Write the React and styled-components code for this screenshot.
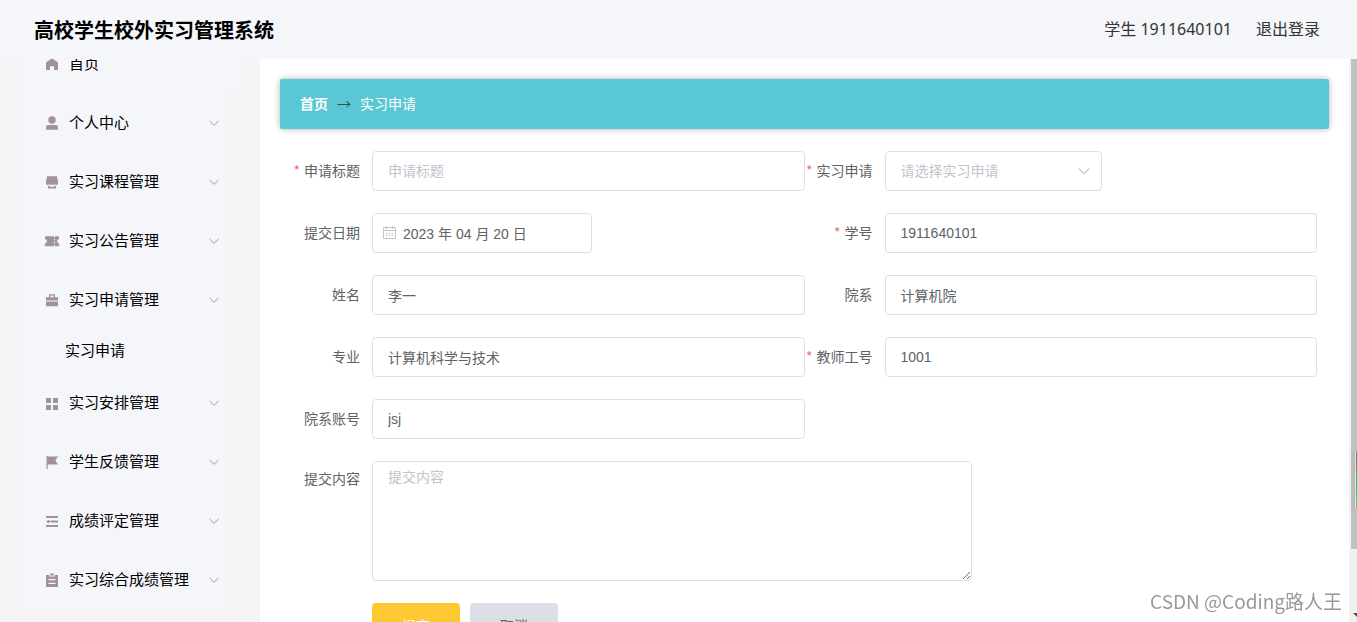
import React, { useState } from "react";
import styled, { createGlobalStyle } from "styled-components";

const GlobalStyle = createGlobalStyle`
  * {
    box-sizing: border-box;
  }

  body {
    margin: 0;
    font-family: "Noto Sans CJK SC", sans-serif;
    color: #606266;
  }

  button, input, select, textarea {
    font-family: "Liberation Sans", "Noto Sans CJK SC", sans-serif;
    font-size: 14px;
  }
`;

const Page = styled.div`
  height: 100vh;
  display: flex;
  flex-direction: column;
  overflow: hidden;
`;

const Header = styled.header`
  flex: none;
  height: 59px;
  padding: 0 37px 0 34px;
  display: flex;
  align-items: center;
  justify-content: space-between;
  background: #f4f6fa;
  z-index: 1;
`;

const Title = styled.h1`
  margin: 0;
  font-size: 20px;
  font-weight: bold;
  color: #000;
`;

const UserBar = styled.div`
  padding-bottom: 4px;
  display: flex;
  gap: 24px;
  font-family: "Noto Sans", "Noto Sans CJK SC", sans-serif;
  font-size: 16px;
  color: #333;
`;

const Logout = styled.a`
  color: inherit;
  text-decoration: none;
`;

const Body = styled.div`
  flex: 1;
  min-height: 0;
  display: flex;
`;

const Sidebar = styled.aside`
  flex: none;
  width: 260px;
  padding: 0 20px;
  background: #f5f5f5;
  overflow: hidden;
`;

// the menu is scrolled a little under the header
const Menu = styled.nav`
  margin-top: -25px;
  display: flex;
  flex-direction: column;
`;

const MenuItem = styled.button`
  height: 59px;
  margin: 0 ${(p) => (p.$wide ? "0" : "11px")} 0 0;
  padding: 0 9px 0 25px;
  display: flex;
  align-items: center;
  gap: 10px;
  border: none;
  background: #f4f6fa;
  font-family: "Noto Sans CJK SC", sans-serif;
  font-size: 15px;
  color: #000;
  text-align: left;
  cursor: pointer;
`;

const MenuText = styled.span`
  flex: 1;
  padding-bottom: 3px;
  white-space: nowrap;
`;

const SubItem = styled.a`
  height: 44px;
  margin-right: 11px;
  padding: 0 0 3px 45px;
  display: flex;
  align-items: center;
  background: #f4f6fa;
  font-size: 15px;
  color: #000;
  text-decoration: none;
`;

const Content = styled.main`
  flex: 1;
  min-width: 0;
  padding: 20px;
  background: #fff;
  overflow: hidden;
`;

const Breadcrumb = styled.div`
  height: 50px;
  padding: 0 20px 2px;
  display: flex;
  align-items: center;
  gap: 9px;
  border-radius: 2px;
  background: #59c7d4;
  box-shadow: 0 0 6px rgba(0, 0, 0, 0.3);
  font-size: 14px;
  color: #fff;
`;

const CrumbLink = styled.a`
  font-weight: bold;
  color: #fff;
  text-decoration: none;
`;

const CrumbArrow = styled.span`
  font-weight: 300;
  color: #303133;
`;

const Form = styled.form`
  padding: 22px 12px;
  display: grid;
  grid-template-columns: 1fr 1fr;
  row-gap: 22px;
`;

const FormItem = styled.div`
  display: flex;
  align-items: flex-start;
  grid-column: ${(p) => (p.$full ? "1 / -1" : "auto")};
`;

const Label = styled.label`
  flex: none;
  width: 80px;
  height: 38px;
  padding-right: 12px;
  line-height: ${(p) => (p.$top ? "34px" : "38px")};
  font-size: 14px;
  text-align: right;
  white-space: nowrap;

  &::before {
    content: "${(p) => (p.$required ? "*" : "")}";
    margin-right: 4px;
    color: #f56c6c;
  }
`;

const Input = styled.input`
  flex: 1;
  min-width: 0;
  height: 40px;
  padding: 0 15px;
  border: 1px solid #dcdfe6;
  border-radius: 4px;
  outline: none;
  background: #fff;
  color: #606266;

  &::placeholder {
    color: #c0c4cc;
  }
`;

const Field = styled.div`
  position: relative;
  width: ${(p) => p.$width};
  display: flex;

  svg {
    position: absolute;
    top: 13px;
    ${(p) => p.$side}: 11px;
    pointer-events: none;
  }
`;

const DateInput = styled(Input)`
  padding-left: 30px;
`;

const Select = styled.select`
  flex: 1;
  height: 40px;
  padding: 0 30px 0 15px;
  appearance: none;
  border: 1px solid #dcdfe6;
  border-radius: 4px;
  outline: none;
  background: #fff;
  color: #c0c4cc;
`;

const Textarea = styled.textarea`
  width: 600px;
  height: 120px;
  padding: 5px 15px;
  border: 1px solid #dcdfe6;
  border-radius: 4px;
  outline: none;
  line-height: 21px;
  color: #606266;

  &::placeholder {
    color: #c0c4cc;
  }
`;

const Actions = styled.div`
  grid-column: 1 / -1;
  padding-left: 80px;
  display: flex;
  gap: 10px;
`;

const Button = styled.button`
  width: 88px;
  height: 44px;
  border: none;
  border-radius: 4px;
  background: ${(p) => (p.$primary ? "#fdc831" : "#dcdfe6")};
  color: ${(p) => (p.$primary ? "#fff" : "#606266")};
  cursor: pointer;
`;

const ScrollTrack = styled.div`
  flex: none;
  width: 8px;
  padding-left: 2px;
  display: flex;
  flex-direction: column;
  justify-content: space-between;
  align-items: stretch;
  background: #f1f1f1;
`;

const ScrollThumb = styled.div`
  height: 87%;
  background: #c1c1c1;
`;

const ScrollArrow = styled.svg`
  align-self: flex-end;
  margin-bottom: 5px;
`;

const FloatTab = styled.div`
  position: fixed;
  right: 0;
  bottom: 113px;
  width: 2px;
  height: 58px;
  border-left: 1px solid #e4e4e4;
  border-radius: 3px 0 0 3px;
  background: linear-gradient(#777 0 20px, #22c878 20px 40px, #4fe05a);
  box-shadow: 0 0 4px rgba(0, 0, 0, 0.2);
  z-index: 2;
`;

const Watermark = styled.div`
  position: fixed;
  right: 15px;
  bottom: 8px;
  font-size: 19px;
  color: #999;
  z-index: 2;
`;

const iconShapes = {
  home: <path d="M7 1.2 13 5.4V12.4a.5.5 0 0 1-.5.5H9V9.3H5v3.6H1.5a.5.5 0 0 1-.5-.5V5.4z" />,
  user: (
    <>
      <circle cx="7" cy="4" r="3.7" />
      <path d="M3 9h8a2 2 0 0 1 2 2v2.2a.5.5 0 0 1-.5.5h-11a.5.5 0 0 1-.5-.5V11a2 2 0 0 1 2-2z" />
    </>
  ),
  shop: (
    <>
      <path d="M2 1.3h10l1 5.5v1.4a1.5 1.5 0 0 1-3 .4 1.5 1.5 0 0 1-3 0 1.5 1.5 0 0 1-3 0 1.5 1.5 0 0 1-3-.4V6.8z" />
      <path d="M3 10.8h1.5v1h5v-1H11v2.6H3z" />
    </>
  ),
  ticket: (
    <path
      fillRule="evenodd"
      d="M0 2.3h9v1.2h1V2.3h4v2.9a2 2 0 0 0 0 4v3.1h-4v-1.2H9v1.2H0V9.2a2 2 0 0 0 0-4zM9 5v1.5h1V5zm0 3v1.5h1V8z"
    />
  ),
  bag: (
    <path
      fillRule="evenodd"
      d="M4 4.3v-3h6v3h3v3.2H1V4.3zm1.3 0h3.4V2.5H5.3zM1 8.6h12v4.7H1z"
    />
  ),
  grid: <path d="M1 2h5v5H1zM8 2h5v5H8zM1 9h5v5H1zM8 9h5v5H8z" />,
  flag: <path d="M1.5 1h1.2v.5H13l-2.6 4L13 9.5H2.7V14H1.5z" />,
  fold: <path d="M1 2h12v2H1zM5.5 6.5H13v2H5.5zM1 11h12v2H1zM1 7.5l3-2v1.2h1v1.6H4v1.2z" />,
  order: (
    <path
      fillRule="evenodd"
      d="M1 2h3.3v1.5h5.4V2H13v12H1zM5.2.5h3.6v2H5.2zM3.5 6v1.2h7V6zm0 3.7v1.2h7V9.7z"
    />
  ),
};

const MenuIcon = ({ name }) => (
  <svg width="14" height="14" viewBox="0 0 14 14" fill="#a1919b">
    {iconShapes[name]}
  </svg>
);

const Chevron = ({ color, size }) => (
  <svg width={size} height={size} viewBox="0 0 12 12" fill="none" stroke={color}>
    <path d="M1.5 4 6 8.3 10.5 4" />
  </svg>
);

const CalendarIcon = () => (
  <svg width="14" height="14" viewBox="0 0 14 14" fill="none" stroke="#c0c4cc">
    <path d="M.5 1.5h12v11H.5zM.5 4.5h12M3.5 0v3M9.5 0v3" />
    <path d="M3 7.5h1.5M5.8 7.5h1.5M8.5 7.5H10M3 9.5h1.5M5.8 9.5h1.5M8.5 9.5H10" />
  </svg>
);

const menus = [
  { icon: "home", text: "首页", single: true },
  { icon: "user", text: "个人中心" },
  { icon: "shop", text: "实习课程管理" },
  { icon: "ticket", text: "实习公告管理" },
  { icon: "bag", text: "实习申请管理", children: ["实习申请"] },
  { icon: "grid", text: "实习安排管理" },
  { icon: "flag", text: "学生反馈管理" },
  { icon: "fold", text: "成绩评定管理" },
  { icon: "order", text: "实习综合成绩管理" },
];

function TextItem({ id, label, required, value, onChange, placeholder }) {
  return (
    <FormItem>
      <Label htmlFor={id} $required={required}>
        {label}
      </Label>
      <Input id={id} value={value} onChange={onChange} placeholder={placeholder} />
    </FormItem>
  );
}

export default function App() {
  const [form, setForm] = useState({
    title: "",
    date: "2023 年 04 月 20 日",
    studentNo: "1911640101",
    name: "李一",
    department: "计算机院",
    major: "计算机科学与技术",
    teacherNo: "1001",
    account: "jsj",
    content: "",
  });

  const bind = (key) => ({
    id: key,
    value: form[key],
    onChange: (e) => setForm({ ...form, [key]: e.target.value }),
  });

  return (
    <Page>
      <GlobalStyle />
      <Header>
        <Title>高校学生校外实习管理系统</Title>
        <UserBar>
          <span>学生 1911640101</span>
          <Logout href="#logout">退出登录</Logout>
        </UserBar>
      </Header>
      <Body>
        <Sidebar>
          <Menu>
            {menus.map((m) => (
              <React.Fragment key={m.text}>
                <MenuItem type="button" $wide={m.single}>
                  <MenuIcon name={m.icon} />
                  <MenuText>{m.text}</MenuText>
                  {!m.single && <Chevron color="#a09ca8" size={12} />}
                </MenuItem>
                {m.children?.map((c) => (
                  <SubItem key={c} href="#apply">
                    {c}
                  </SubItem>
                ))}
              </React.Fragment>
            ))}
          </Menu>
        </Sidebar>
        <Content>
          <Breadcrumb>
            <CrumbLink href="#home">首页</CrumbLink>
            <CrumbArrow>→</CrumbArrow>
            <span>实习申请</span>
          </Breadcrumb>
          <Form onSubmit={(e) => e.preventDefault()}>
            <TextItem label="申请标题" required placeholder="申请标题" {...bind("title")} />
            <FormItem>
              <Label htmlFor="apply" $required>
                实习申请
              </Label>
              <Field $width="217px" $side="right">
                <Select id="apply">
                  <option>请选择实习申请</option>
                </Select>
                <Chevron color="#c0c4cc" size={14} />
              </Field>
            </FormItem>
            <FormItem>
              <Label htmlFor="date">提交日期</Label>
              <Field $width="220px" $side="left">
                <DateInput {...bind("date")} />
                <CalendarIcon />
              </Field>
            </FormItem>
            <TextItem label="学号" required {...bind("studentNo")} />
            <TextItem label="姓名" {...bind("name")} />
            <TextItem label="院系" {...bind("department")} />
            <TextItem label="专业" {...bind("major")} />
            <TextItem label="教师工号" required {...bind("teacherNo")} />
            <TextItem label="院系账号" {...bind("account")} />
            <FormItem $full>
              <Label htmlFor="content" $top>
                提交内容
              </Label>
              <Textarea placeholder="提交内容" {...bind("content")} />
            </FormItem>
            <Actions>
              <Button type="submit" $primary>
                提交
              </Button>
              <Button type="button">取消</Button>
            </Actions>
          </Form>
        </Content>
        <ScrollTrack>
          <ScrollThumb />
          <ScrollArrow width="4" height="4" viewBox="0 0 4 4" fill="#505050">
            <path d="M0 0h4v4z" />
          </ScrollArrow>
        </ScrollTrack>
      </Body>
      <FloatTab />
      <Watermark>CSDN @Coding路人王</Watermark>
    </Page>
  );
}
